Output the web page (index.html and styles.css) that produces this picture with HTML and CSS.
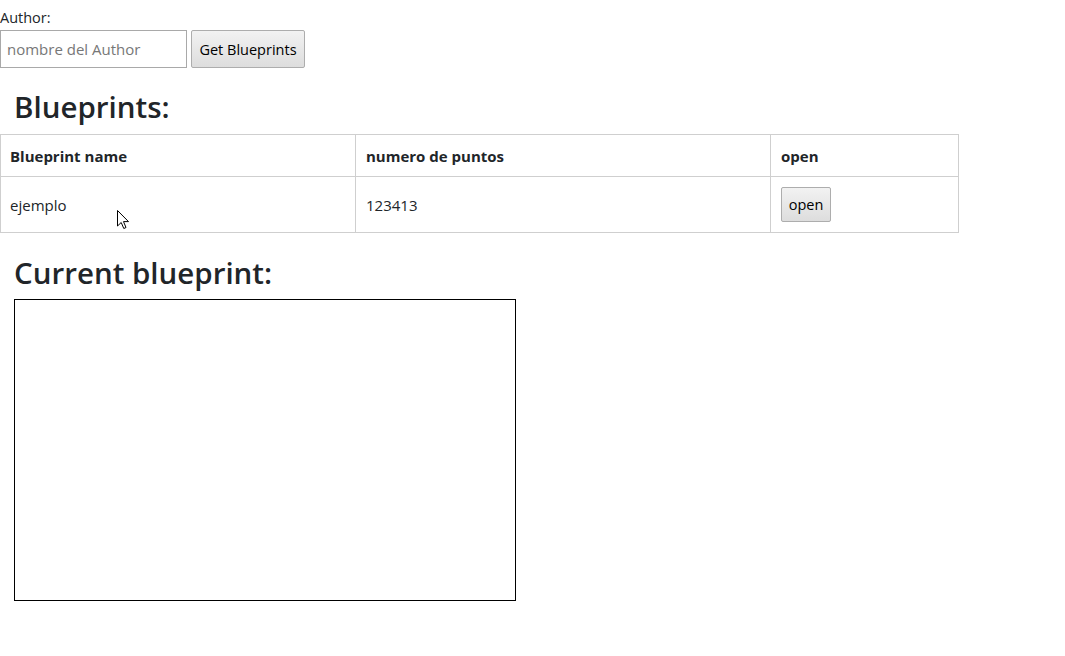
FILE: index.html
```html
<!DOCTYPE html>
<html lang="es">
<head>
<meta charset="utf-8">
<title>Blueprints</title>
<link rel="stylesheet" href="styles.css">
</head>
<body>
<div class="search">
  <label class="label" for="author">Author:</label>
  <div class="search-row">
    <input id="author" class="author-input" type="text" placeholder="nombre del Author">
    <button class="btn btn-get">Get Blueprints</button>
  </div>
</div>
<h2 class="title">Blueprints:</h2>
<div class="table-wrap">
<table class="bp-table">
  <thead>
    <tr><th class="c1">Blueprint name</th><th class="c2">numero de puntos</th><th class="c3">open</th></tr>
  </thead>
  <tbody>
    <tr><td>ejemplo</td><td>123413</td><td><button class="btn btn-open">open</button></td></tr>
  </tbody>
</table>
<svg class="cursor" width="14" height="20" viewBox="0 0 14 20"><path d="M0.5 0.5 L0.5 16 L4.2 12.5 L6.8 18.5 L9 17.5 L6.5 11.6 L11.5 11.6 Z" fill="#fff" stroke="#000" stroke-width="1" stroke-linejoin="miter"/></svg>
</div>
<h2 class="title title-current">Current blueprint:</h2>
<div class="canvas-box"></div>
</body>
</html>
```
FILE: styles.css
```css
html, body {
  margin: 0;
  padding: 0;
  background: #fff;
}
body {
  font-family: "Open Sans", "Noto Sans", sans-serif;
  color: #212529;
  font-size: 14px;
}
.search {
  padding-top: 9px;
}
.label {
  display: block;
  font-size: 14.5px;
  line-height: 18px;
  color: #212529;
}
.search-row {
  display: flex;
  gap: 4px;
  margin-top: 3px;
}
.author-input {
  box-sizing: border-box;
  width: 187px;
  height: 38px;
  border: 1px solid #a9a9a9;
  border-radius: 0;
  padding: 0 6px;
  font-family: inherit;
  font-size: 15px;
  color: #212529;
  margin: 0;
}
.author-input::placeholder {
  color: #777;
}
.btn {
  box-sizing: border-box;
  font-family: inherit;
  color: #000;
  border: 1px solid #adadad;
  border-radius: 2px;
  background: linear-gradient(#f2f2f2, #dddddd);
  margin: 0;
  padding: 0 6px;
  cursor: default;
}
.btn-get {
  height: 38px;
  width: 114px;
  font-size: 14.5px;
}
.title {
  margin: 22px 0 0 14px;
  font-size: 29.5px;
  font-weight: 600;
  line-height: 34px;
  color: #212529;
}
.table-wrap {
  position: relative;
  margin-top: 10px;
  width: 959px;
}
.bp-table {
  width: 959px;
  border-collapse: collapse;
  font-size: 15px;
}
.bp-table th, .bp-table td {
  border: 1px solid #cfcfcf;
  text-align: left;
  padding: 0 9px 0 10px;
}
.bp-table th:first-child, .bp-table td:first-child {
  padding-left: 9px;
}
.bp-table th {
  height: 41px;
  font-weight: 700;
}
.bp-table td {
  height: 55px;
}
.c1 { width: 336px; }
.c2 { width: 395px; }
.btn-open {
  height: 35px;
  width: 50px;
  font-size: 14.5px;
  padding: 0;
}
.cursor {
  position: absolute;
  left: 117px;
  top: 76px;
}
.title-current {
  margin-top: 23px;
}
.canvas-box {
  box-sizing: border-box;
  width: 502px;
  height: 302px;
  border: 1px solid #000;
  margin: 9px 0 0 14px;
}
```
